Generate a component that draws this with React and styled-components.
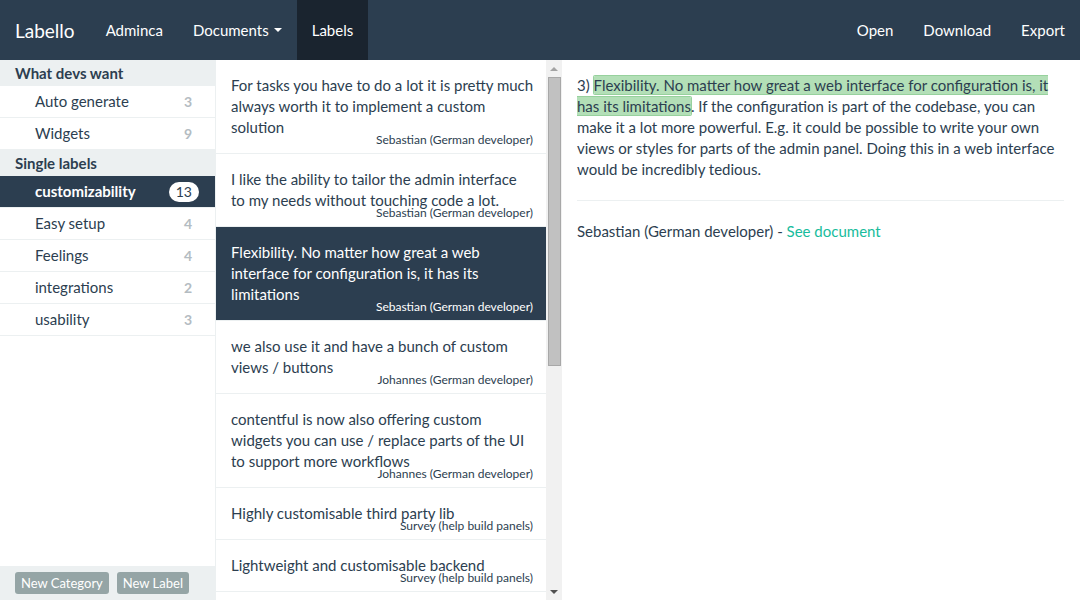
import React from 'react';
import styled, { createGlobalStyle } from 'styled-components';

const GlobalStyle = createGlobalStyle`
  html, body {
    margin: 0;
    padding: 0;
    height: 100%;
  }
  body {
    font-family: Lato, "Open Sans", "Liberation Sans", sans-serif;
    font-size: 15px;
    line-height: 21px;
    color: #2c3e50;
    background: #fff;
  }
  * {
    box-sizing: border-box;
  }
`;

const Page = styled.div`
  display: flex;
  flex-direction: column;
  height: 600px;
  overflow: hidden;
`;

const Navbar = styled.nav`
  display: flex;
  align-items: stretch;
  height: 60px;
  background: #2c3e50;
  flex-shrink: 0;
`;

const Brand = styled.div`
  padding: 1px 16px 0 15px;
  font-size: 19px;
  line-height: 59px;
  color: #fff;
`;

const NavGroup = styled.div`
  display: flex;
  margin-left: ${({ right }) => (right ? 'auto' : '0')};
`;

const NavLink = styled.a`
  display: flex;
  align-items: center;
  padding: 0 15px;
  color: #fff;
  text-decoration: none;
  background: ${({ active }) => (active ? '#1a242f' : 'transparent')};
`;

const Caret = styled.span`
  display: inline-block;
  margin-left: 5px;
  width: 0;
  height: 0;
  border-top: 4px solid #fff;
  border-left: 4px solid transparent;
  border-right: 4px solid transparent;
`;

const Main = styled.div`
  display: flex;
  flex: 1;
  min-height: 0;
`;

const Sidebar = styled.aside`
  width: 216px;
  flex-shrink: 0;
  display: flex;
  flex-direction: column;
  border-right: 1px solid #ecf0f1;
`;

const GroupHeader = styled.div`
  padding: 3px 15px;
  line-height: 20px;
  background: #ecf0f1;
  font-weight: 700;
`;

const LabelRow = styled.div`
  display: flex;
  align-items: center;
  justify-content: space-between;
  padding: 5px 16px 5px 35px;
  border-bottom: 1px solid #ecf0f1;
  background: ${({ active }) => (active ? '#2c3e50' : '#fff')};
  color: ${({ active }) => (active ? '#fff' : '#2c3e50')};
  font-weight: ${({ active }) => (active ? 700 : 400)};
`;

const Badge = styled.span`
  display: inline-block;
  min-width: 10px;
  padding: 0 7px;
  font-size: 14px;
  line-height: 20px;
  font-weight: ${({ active }) => (active ? 400 : 700)};
  border-radius: 10px;
  text-align: center;
  background: ${({ active }) => (active ? '#fff' : 'transparent')};
  color: ${({ active }) => (active ? '#2c3e50' : '#b4bcc2')};
`;

const SidebarFooter = styled.div`
  margin-top: auto;
  display: flex;
  gap: 8px;
  padding: 6px 15px 6px;
  background: #ecf0f1;
`;

const SmallButton = styled.button`
  font-family: inherit;
  font-size: 13px;
  line-height: 18px;
  padding: 2px 6px;
  border: none;
  border-radius: 3px;
  background: #95a5a6;
  color: #fff;
`;

const ListColumn = styled.div`
  width: 346px;
  flex-shrink: 0;
  display: flex;
`;

const ListScroll = styled.div`
  flex: 1;
  overflow: hidden;
`;

const Quote = styled.div`
  position: relative;
  padding: 15px 12px 15px 15px;
  border-bottom: 1px solid #ecf0f1;
  background: ${({ active }) => (active ? '#2c3e50' : '#fff')};
  color: ${({ active }) => (active ? '#fff' : '#2c3e50')};
`;

const Author = styled.span`
  position: absolute;
  right: 13px;
  bottom: 6px;
  font-size: 12px;
  line-height: 14px;
`;

const ScrollTrack = styled.div`
  width: 16px;
  flex-shrink: 0;
  display: flex;
  flex-direction: column;
  align-items: center;
  background: #f1f1f1;
`;

const Arrow = styled.div`
  height: 17px;
  width: 100%;
  display: flex;
  align-items: center;
  justify-content: center;
  margin-top: ${({ down }) => (down ? 'auto' : '0')};
  &::before {
    content: '';
    width: 0;
    height: 0;
    border-left: 4px solid transparent;
    border-right: 4px solid transparent;
    ${({ down }) =>
      down ? 'border-top: 4px solid #505050;' : 'border-bottom: 4px solid #a3a3a3;'}
  }
`;

const Thumb = styled.div`
  width: 13px;
  height: 289px;
  background: #c1c1c1;
  border: 1px solid #a8a8a8;
`;

const Detail = styled.section`
  flex: 1;
  padding: 15px 16px 15px 15px;
  min-width: 0;
`;

const Paragraph = styled.p`
  margin: 0 0 10px;
`;

const Highlight = styled.span`
  background: #b3dfb7;
  box-shadow: 0 0 0 1px #97d19d;
  border-radius: 1px;
`;

const Rule = styled.hr`
  margin: 20px 0;
  border: 0;
  border-top: 1px solid #ecf0f1;
`;

const DocLink = styled.a`
  color: #18bc9c;
  text-decoration: none;
`;

const groups = [
  {
    title: 'What devs want',
    labels: [
      { name: 'Auto generate', count: 3 },
      { name: 'Widgets', count: 9 },
    ],
  },
  {
    title: 'Single labels',
    labels: [
      { name: 'customizability', count: 13, active: true },
      { name: 'Easy setup', count: 4 },
      { name: 'Feelings', count: 4 },
      { name: 'integrations', count: 2 },
      { name: 'usability', count: 3 },
    ],
  },
];

const quotes = [
  {
    text: 'For tasks you have to do a lot it is pretty much always worth it to implement a custom solution',
    author: 'Sebastian (German developer)',
  },
  {
    text: 'I like the ability to tailor the admin interface to my needs without touching code a lot.',
    author: 'Sebastian (German developer)',
  },
  {
    text: 'Flexibility. No matter how great a web interface for configuration is, it has its limitations',
    author: 'Sebastian (German developer)',
    active: true,
  },
  {
    text: 'we also use it and have a bunch of custom views / buttons',
    author: 'Johannes (German developer)',
  },
  {
    text: 'contentful is now also offering custom widgets you can use / replace parts of the UI to support more workflows',
    author: 'Johannes (German developer)',
  },
  { text: 'Highly customisable third party lib', author: 'Survey (help build panels)' },
  { text: 'Lightweight and customisable backend', author: 'Survey (help build panels)' },
  { text: 'Easy to extend with own components', author: 'Survey (help build panels)' },
];

const App = () => (
  <>
    <GlobalStyle />
    <Page>
      <Navbar>
        <Brand>Labello</Brand>
        <NavGroup>
          <NavLink>Adminca</NavLink>
          <NavLink>
            Documents <Caret />
          </NavLink>
          <NavLink active>Labels</NavLink>
        </NavGroup>
        <NavGroup right>
          <NavLink>Open</NavLink>
          <NavLink>Download</NavLink>
          <NavLink>Export</NavLink>
        </NavGroup>
      </Navbar>
      <Main>
        <Sidebar>
          {groups.map((group) => (
            <div key={group.title}>
              <GroupHeader>{group.title}</GroupHeader>
              {group.labels.map((label) => (
                <LabelRow key={label.name} active={label.active}>
                  <span>{label.name}</span>
                  <Badge active={label.active}>{label.count}</Badge>
                </LabelRow>
              ))}
            </div>
          ))}
          <SidebarFooter>
            <SmallButton>New Category</SmallButton>
            <SmallButton>New Label</SmallButton>
          </SidebarFooter>
        </Sidebar>
        <ListColumn>
          <ListScroll>
            {quotes.map((quote, i) => (
              <Quote key={i} active={quote.active}>
                {quote.text}
                <Author>{quote.author}</Author>
              </Quote>
            ))}
          </ListScroll>
          <ScrollTrack>
            <Arrow />
            <Thumb />
            <Arrow down />
          </ScrollTrack>
        </ListColumn>
        <Detail>
          <Paragraph>
            3){' '}
            <Highlight>
              Flexibility. No matter how great a web interface for configuration is, it has its
              limitations
            </Highlight>
            . If the configuration is part of the codebase, you can make it a lot more powerful.
            E.g. it could be possible to write your own views or styles for parts of the admin
            panel. Doing this in a web interface would be incredibly tedious.
          </Paragraph>
          <Rule />
          <div>
            Sebastian (German developer) - <DocLink>See document</DocLink>
          </div>
        </Detail>
      </Main>
    </Page>
  </>
);

export default App;
